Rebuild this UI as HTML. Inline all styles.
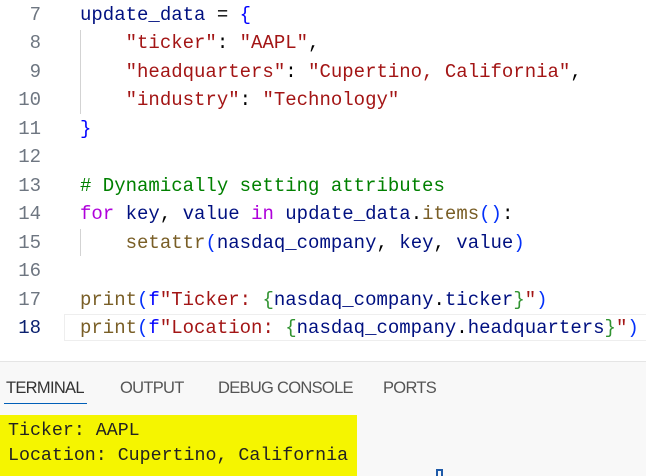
<!DOCTYPE html>
<html><head><meta charset="utf-8"><style>
body{margin:0;width:646px;height:475px;overflow:hidden;background:#fff;position:relative;font-family:"Liberation Mono",monospace;}
.ln{position:absolute;left:0;width:41px;text-align:right;font-size:19px;color:#6e7681;line-height:28px;}
.code{position:absolute;left:80px;font-size:19px;white-space:pre;line-height:28px;color:#001080;}
.k{color:#af00db}.b{color:#0431fa}.s{color:#a31515}.f{color:#795e26}.c{color:#008000}.g{color:#319331}.d{color:#000}.bl{color:#0000ff}
.guide{position:absolute;left:80px;width:1px;background:#d3d3d3;}
.panel{position:absolute;left:0;top:361px;width:646px;height:114px;background:#f8f8f8;border-top:1px solid #e5e5e5;}
.tab{position:absolute;top:17px;font-family:"Liberation Sans",sans-serif;font-size:16.5px;color:#555;letter-spacing:-0.7px}
.out{position:absolute;left:0;top:53px;width:357px;height:61px;background:#f5f500;}
.out div{position:absolute;left:8px;font-size:18.3px;color:#222;white-space:pre}
</style></head><body>
<div class="guide" style="top:30px;height:84px"></div>
<div class="guide" style="top:229px;height:27px"></div>
<div style="position:absolute;left:64px;top:314px;width:590px;height:27px;border:1px solid #eee;box-sizing:border-box"></div>
<div class="ln" style="top:1px">7</div><div class="code" style="top:1px">update_data <span class="d">=</span> <span class="bl">{</span></div>
<div class="ln" style="top:29px">8</div><div class="code" style="top:29px">    <span class="s">"ticker"</span><span class="d">:</span> <span class="s">"AAPL"</span><span class="d">,</span></div>
<div class="ln" style="top:58px">9</div><div class="code" style="top:58px">    <span class="s">"headquarters"</span><span class="d">:</span> <span class="s">"Cupertino, California"</span><span class="d">,</span></div>
<div class="ln" style="top:86px">10</div><div class="code" style="top:86px">    <span class="s">"industry"</span><span class="d">:</span> <span class="s">"Technology"</span></div>
<div class="ln" style="top:115px">11</div><div class="code" style="top:115px"><span class="bl">}</span></div>
<div class="ln" style="top:143px">12</div>
<div class="ln" style="top:172px">13</div><div class="code" style="top:172px"><span class="c"># Dynamically setting attributes</span></div>
<div class="ln" style="top:200px">14</div><div class="code" style="top:200px"><span class="k">for</span> key<span class="d">,</span> value <span class="k">in</span> update_data<span class="d">.</span><span class="f">items</span><span class="b">()</span><span class="d">:</span></div>
<div class="ln" style="top:229px">15</div><div class="code" style="top:229px">    <span class="f">setattr</span><span class="b">(</span>nasdaq_company<span class="d">,</span> key<span class="d">,</span> value<span class="b">)</span></div>
<div class="ln" style="top:257px">16</div>
<div class="ln" style="top:286px">17</div><div class="code" style="top:286px"><span class="f">print</span><span class="b">(</span><span class="bl">f</span><span class="s">"Ticker: </span><span class="g">{</span>nasdaq_company<span class="d">.</span>ticker<span class="g">}</span><span class="s">"</span><span class="b">)</span></div>
<div class="ln" style="top:314px;color:#0b216f">18</div><div class="code" style="top:314px"><span class="f">print</span><span class="b">(</span><span class="bl">f</span><span class="s">"Location: </span><span class="g">{</span>nasdaq_company<span class="d">.</span>headquarters<span class="g">}</span><span class="s">"</span><span class="b">)</span></div>
<div class="panel">
<div class="tab" style="left:6px;color:#333">TERMINAL</div>
<div style="position:absolute;left:4px;top:41px;width:83px;height:1px;background:#005fb8"></div>
<div class="tab" style="left:120px">OUTPUT</div>
<div class="tab" style="left:218px">DEBUG CONSOLE</div>
<div class="tab" style="left:383px">PORTS</div>
<div class="out"><div style="top:6px">Ticker: AAPL</div><div style="top:31px">Location: Cupertino, California</div></div>
<div style="position:absolute;left:436px;top:107px;width:7px;height:7px;border:2px solid #1e5aa8;border-bottom:none;box-sizing:border-box"></div>
</div>
</body></html>
